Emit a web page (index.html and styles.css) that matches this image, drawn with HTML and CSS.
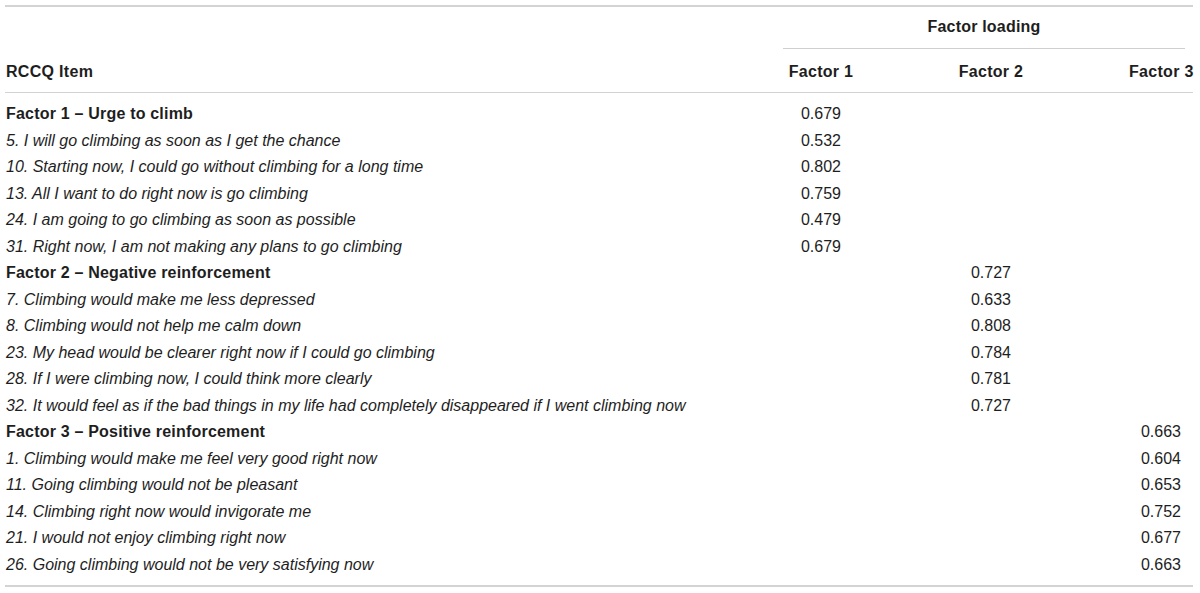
FILE: index.html
```html
<!DOCTYPE html>
<html>
<head>
<meta charset="utf-8">
<link rel="stylesheet" href="styles.css">
</head>
<body>
<div class="table">
  <div class="cell item h1"></div>
  <div class="cell span h1"><span class="span-inner">Factor loading</span></div>

  <div class="cell item h2">RCCQ Item</div>
  <div class="cell val h2">Factor 1</div>
  <div class="cell val h2">Factor 2</div>
  <div class="cell val v3 h2">Factor 3</div>

  <div class="cell item group first">Factor 1 – Urge to climb</div><div class="cell val first">0.679</div><div class="cell val first"></div><div class="cell val v3 first"></div>
  <div class="cell item it">5. I will go climbing as soon as I get the chance</div><div class="cell val">0.532</div><div class="cell val"></div><div class="cell val v3"></div>
  <div class="cell item it">10. Starting now, I could go without climbing for a long time</div><div class="cell val">0.802</div><div class="cell val"></div><div class="cell val v3"></div>
  <div class="cell item it">13. All I want to do right now is go climbing</div><div class="cell val">0.759</div><div class="cell val"></div><div class="cell val v3"></div>
  <div class="cell item it">24. I am going to go climbing as soon as possible</div><div class="cell val">0.479</div><div class="cell val"></div><div class="cell val v3"></div>
  <div class="cell item it">31. Right now, I am not making any plans to go climbing</div><div class="cell val">0.679</div><div class="cell val"></div><div class="cell val v3"></div>

  <div class="cell item group">Factor 2 – Negative reinforcement</div><div class="cell val"></div><div class="cell val">0.727</div><div class="cell val v3"></div>
  <div class="cell item it">7. Climbing would make me less depressed</div><div class="cell val"></div><div class="cell val">0.633</div><div class="cell val v3"></div>
  <div class="cell item it">8. Climbing would not help me calm down</div><div class="cell val"></div><div class="cell val">0.808</div><div class="cell val v3"></div>
  <div class="cell item it">23. My head would be clearer right now if I could go climbing</div><div class="cell val"></div><div class="cell val">0.784</div><div class="cell val v3"></div>
  <div class="cell item it">28. If I were climbing now, I could think more clearly</div><div class="cell val"></div><div class="cell val">0.781</div><div class="cell val v3"></div>
  <div class="cell item it">32. It would feel as if the bad things in my life had completely disappeared if I went climbing now</div><div class="cell val"></div><div class="cell val">0.727</div><div class="cell val v3"></div>

  <div class="cell item group">Factor 3 – Positive reinforcement</div><div class="cell val"></div><div class="cell val"></div><div class="cell val v3">0.663</div>
  <div class="cell item it">1. Climbing would make me feel very good right now</div><div class="cell val"></div><div class="cell val"></div><div class="cell val v3">0.604</div>
  <div class="cell item it">11. Going climbing would not be pleasant</div><div class="cell val"></div><div class="cell val"></div><div class="cell val v3">0.653</div>
  <div class="cell item it">14. Climbing right now would invigorate me</div><div class="cell val"></div><div class="cell val"></div><div class="cell val v3">0.752</div>
  <div class="cell item it">21. I would not enjoy climbing right now</div><div class="cell val"></div><div class="cell val"></div><div class="cell val v3">0.677</div>
  <div class="cell item it last">26. Going climbing would not be very satisfying now</div><div class="cell val last"></div><div class="cell val last"></div><div class="cell val v3 last">0.663</div>
</div>
</body>
</html>
```
FILE: styles.css
```css
html, body {
  margin: 0;
  padding: 0;
  background: #fff;
}
body {
  font-family: "Liberation Sans", Arial, sans-serif;
  font-size: 16px;
  color: #1e1e1e;
}
.table {
  margin: 5px 0 0 5px;
  width: 1188px;
  display: grid;
  grid-template-columns: 731px 170px 170px 117px;
  border-top: 2px solid #d3d3d3;
  border-bottom: 2px solid #d3d3d3;
}
.cell {
  line-height: 26.5px;
  white-space: nowrap;
}
.item {
  padding-left: 1px;
}
.val {
  text-align: center;
}
.v3 {
  padding-left: 53px;
}
.h1 {
  line-height: 20px;
  padding-top: 10px;
  padding-bottom: 0;
}
.span {
  grid-column: 2 / 5;
  padding-left: 47px;
  padding-right: 8px;
}
.span-inner {
  display: block;
  text-align: center;
  font-weight: bold;
  letter-spacing: 0.2px;
  padding-bottom: 11px;
  border-bottom: 1px solid #cfcfcf;
}
.h2 {
  font-weight: bold;
  letter-spacing: 0.3px;
  line-height: 20px;
  padding-top: 13px;
  padding-bottom: 10px;
  border-bottom: 1px solid #d3d3d3;
}
.group {
  font-weight: bold;
  letter-spacing: 0.2px;
}
.it {
  font-style: italic;
}
.first {
  padding-top: 8px;
}
.last {
  padding-bottom: 7px;
}
```
